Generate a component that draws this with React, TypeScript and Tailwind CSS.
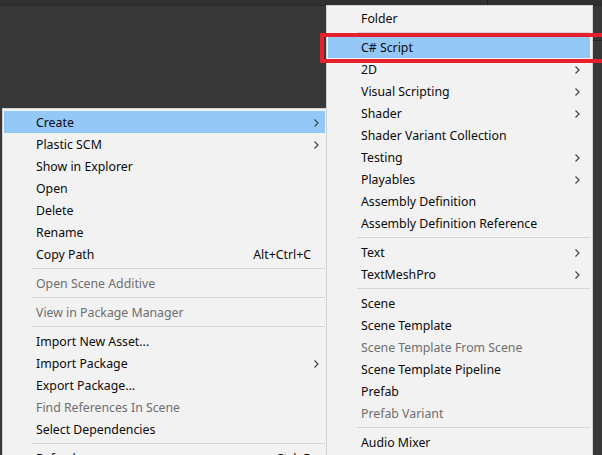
type Item =
  | { sep: true }
  | {
      sep?: false;
      label: string;
      sub?: boolean;
      off?: boolean;
      hot?: boolean;
      keys?: string;
    };

const leftItems: Item[] = [
  { label: "Create", sub: true, hot: true },
  { label: "Plastic SCM", sub: true },
  { label: "Show in Explorer" },
  { label: "Open" },
  { label: "Delete" },
  { label: "Rename" },
  { label: "Copy Path", keys: "Alt+Ctrl+C" },
  { sep: true },
  { label: "Open Scene Additive", off: true },
  { sep: true },
  { label: "View in Package Manager", off: true },
  { sep: true },
  { label: "Import New Asset..." },
  { label: "Import Package", sub: true },
  { label: "Export Package..." },
  { label: "Find References In Scene", off: true },
  { label: "Select Dependencies" },
  { sep: true },
  { label: "Refresh", keys: "Ctrl+R" },
];

const rightItems: Item[] = [
  { label: "Folder" },
  { sep: true },
  { label: "C# Script", hot: true },
  { label: "2D", sub: true },
  { label: "Visual Scripting", sub: true },
  { label: "Shader", sub: true },
  { label: "Shader Variant Collection" },
  { label: "Testing", sub: true },
  { label: "Playables", sub: true },
  { label: "Assembly Definition" },
  { label: "Assembly Definition Reference" },
  { sep: true },
  { label: "Text", sub: true },
  { label: "TextMeshPro", sub: true },
  { sep: true },
  { label: "Scene" },
  { label: "Scene Template" },
  { label: "Scene Template From Scene", off: true },
  { label: "Scene Template Pipeline" },
  { label: "Prefab" },
  { label: "Prefab Variant", off: true },
  { sep: true },
  { label: "Audio Mixer" },
];

function Chevron() {
  return (
    <svg width="5" height="8" viewBox="0 0 5 8" className="block">
      <polyline
        points="0.5,0.5 4,4 0.5,7.5"
        fill="none"
        stroke="#444"
        strokeWidth="1.2"
      />
    </svg>
  );
}

function MenuList(props: { items: Item[]; side: "left" | "right" }) {
  const left = props.side === "left";
  return (
    <div>
      {props.items.map((item, i) =>
        item.sep ? (
          <div key={i} className="flex h-[7px] items-center">
            <div
              className={
                left
                  ? "ml-[28px] h-px flex-1 bg-[#d5d5d5]"
                  : "ml-[29px] h-px flex-1 bg-[#d5d5d5]"
              }
            />
          </div>
        ) : (
          <div
            key={i}
            className={
              "flex h-[22px] items-center pt-[2px] " +
              (item.hot ? "bg-[#94c8f6] " : "") +
              (left ? "pl-[32px]" : "pl-[33px]")
            }
          >
            <span
              className={
                "flex-1 whitespace-nowrap " +
                (item.off ? "text-[#6e6e6e]" : "text-[#0a0a0a]")
              }
            >
              {item.label}
            </span>
            {item.keys && (
              <span className="whitespace-nowrap text-[#0a0a0a]">
                {item.keys}
              </span>
            )}
            <span
              className={
                left
                  ? "flex w-[14px] justify-end pr-[6px]"
                  : "flex w-[20px] justify-end pr-[10px]"
              }
            >
              {item.sub && <Chevron />}
            </span>
          </div>
        )
      )}
    </div>
  );
}

export default function App() {
  return (
    <div
      className="relative h-[455px] w-[602px] overflow-hidden bg-[#383838] text-[12.3px] leading-none"
      style={{ fontFamily: '"Noto Sans", "Open Sans", sans-serif' }}
    >
      {/* toolbar strip behind the menus */}
      <div className="relative h-[6px] border-b border-[#2a2a2a] bg-[#303030]">
        <div className="absolute left-[487px] top-0 h-[6px] w-px bg-[#1f1f1f]" />
      </div>
      <div className="absolute right-0 top-[40px] h-px w-[10px] bg-[#262626]" />

      {/* context menu */}
      <div className="absolute left-[2px] top-[108px] h-[360px] w-[330px] border border-[#d2d2d2] bg-[#f2f2f2] pl-px pr-[6px] pt-[2px]">
        <MenuList items={leftItems} side="left" />
      </div>

      {/* Create submenu */}
      <div className="absolute left-[326px] top-[5px] h-[470px] w-[267px] border border-[#d2d2d2] bg-[#f2f2f2] pl-px pr-[2px] pt-px">
        <MenuList items={rightItems} side="right" />
      </div>

      {/* red highlight box */}
      <div className="absolute left-[320px] top-[33px] h-[30px] w-[300px] border-[4px] border-[#e8202c]" />
    </div>
  );
}
